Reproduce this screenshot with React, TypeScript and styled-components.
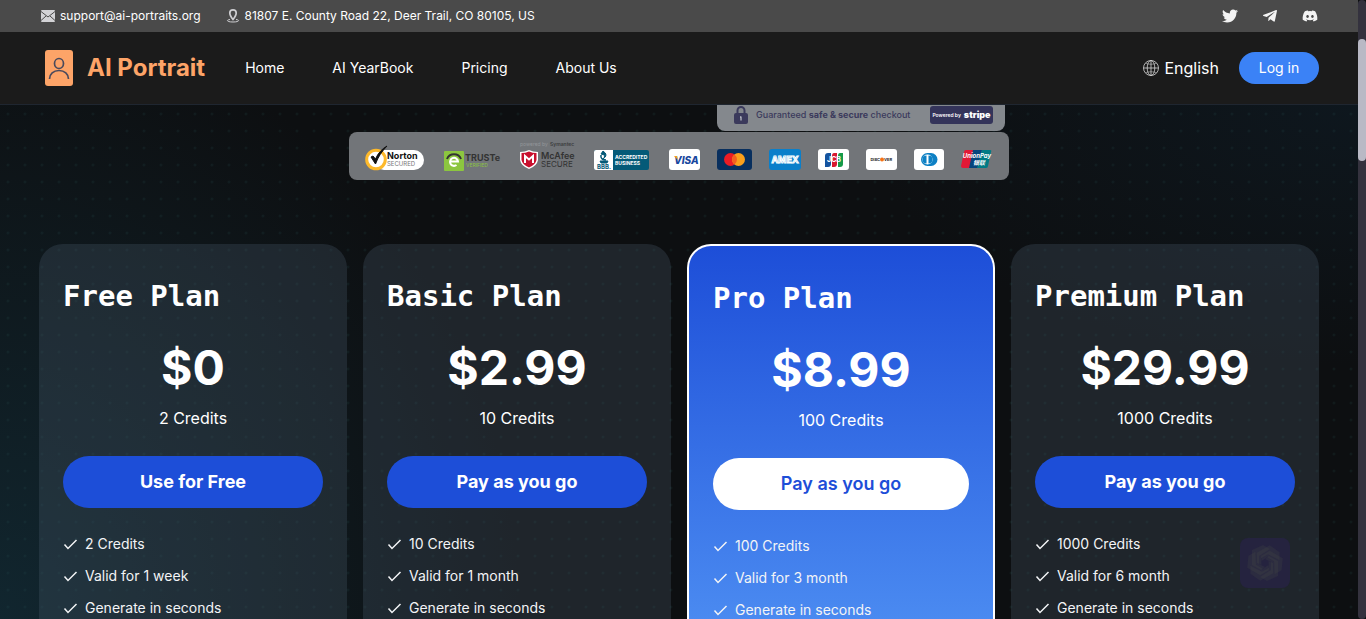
import React from 'react';
import styled, { createGlobalStyle, css } from 'styled-components';
import { FaTwitter, FaTelegramPlane, FaDiscord } from 'react-icons/fa';

const GlobalStyle = createGlobalStyle`
  *, *::before, *::after { box-sizing: border-box; }
  body {
    margin: 0;
    background: #0d0f11;
    color: #fff;
    font-family: Inter, 'Liberation Sans', sans-serif;
  }
  h2, p, ul { margin: 0; padding: 0; }
  a { color: inherit; text-decoration: none; }
  button { font-family: inherit; cursor: pointer; border: 0; }
`;

const Window = styled.div`
  display: grid;
  grid-template-columns: minmax(0, 1fr) 8px;
  height: 100vh;
  overflow: hidden;
`;

const Page = styled.div`
  display: flex;
  flex-direction: column;
  min-height: 0;
`;

const ScrollTrack = styled.div`
  background: #34323e;
  border-radius: 4px;
  padding-top: 39px;
`;

const ScrollThumb = styled.div`
  height: 122px;
  border-radius: 4px;
  background: #b9b9c5;
`;

const ContactBar = styled.div`
  display: flex;
  align-items: center;
  justify-content: space-between;
  flex: none;
  height: 32px;
  padding: 0 40px;
  background: #4a4a4a;
  font-size: 12px;
  line-height: 16px;
`;

const Group = styled.div<{ $gap: number }>`
  display: flex;
  align-items: center;
  gap: ${(p) => p.$gap}px;
`;

const ContactItem = styled.a`
  display: flex;
  align-items: center;
  gap: 4px;
`;

const SocialLink = styled.a`
  display: flex;
  color: #f3f3f3;
  font-size: 16px;
`;

const Header = styled.header`
  flex: none;
  height: 73px;
  background: #1b1b1b;
  border-bottom: 1px solid #1f2630;
`;

const HeaderInner = styled.div`
  display: flex;
  align-items: center;
  justify-content: space-between;
  max-width: 1280px;
  height: 72px;
  margin: 0 auto;
`;

const Brand = styled.a`
  display: flex;
  align-items: center;
  gap: 8px;
  color: #fda468;
  font-size: 24px;
  font-weight: 700;
  line-height: 32px;
`;

const Nav = styled.nav`
  display: flex;
  gap: 48px;
  font-size: 14px;
  line-height: 20px;
`;

const LanguageButton = styled.button`
  display: flex;
  align-items: center;
  gap: 5px;
  padding: 0;
  background: none;
  color: #fff;
  font-size: 16px;
  line-height: 24px;
`;

const LoginButton = styled.button`
  width: 80px;
  height: 32px;
  border-radius: 16px;
  background: #3b82f6;
  color: #fff;
  font-size: 14px;
  line-height: 20px;
`;

const Main = styled.main`
  flex: 1;
  display: flex;
  flex-direction: column;
  align-items: center;
  min-height: 0;
  overflow: hidden;
  background:
    radial-gradient(circle at 8px 9px, rgba(40, 85, 85, 0.24) 0, rgba(40, 85, 85, 0) 2px) 0 0 / 17px 17px,
    radial-gradient(ellipse 520px 600px at 0% 100%, #11262f 0%, rgba(17, 38, 47, 0) 100%),
    radial-gradient(ellipse 500px 260px at 100% 0%, #0e171e 0%, rgba(14, 23, 30, 0) 100%),
    #0d0f11;
`;

const Trust = styled.section`
  display: flex;
  flex-direction: column;
  flex: none;
  gap: 1px;
  width: 660px;
`;

const Checkout = styled.div`
  display: flex;
  align-items: flex-start;
  align-self: flex-end;
  width: 288px;
  height: 26px;
  margin-right: 4px;
  padding: 1px 12px 0 16px;
  border-radius: 0 0 8px 8px;
  background: #84888d;
  color: #3b3a5c;
  font-size: 9px;
  font-weight: 500;
  line-height: 18px;
`;

const CheckoutText = styled.p`
  flex: 1;
  padding-left: 7px;
  white-space: nowrap;
`;

const StripeBadge = styled.span`
  display: flex;
  align-items: center;
  justify-content: center;
  gap: 3px;
  width: 63px;
  height: 18px;
  border-radius: 3px;
  background: #34345a;
  color: #fff;
  font-size: 5px;
  font-weight: 600;
  white-space: nowrap;

  strong { font-size: 9px; }
`;

const LogoStrip = styled.div`
  display: flex;
  gap: 20px;
  padding: 8px 16px;
  border-radius: 8px;
  background: #727579;
`;

const CardLogos = styled.div`
  display: flex;
  gap: 17px;
`;

const Plans = styled.section`
  flex: 1;
  display: grid;
  grid-template-columns: repeat(4, minmax(0, 1fr));
  gap: 16px;
  width: 100%;
  max-width: 1280px;
  min-height: 0;
  margin-top: 64px;
`;

const Card = styled.article<{ $featured?: boolean }>`
  padding: 32px 24px 0;
  border-radius: 24px 24px 0 0;
  background: rgba(73, 88, 105, 0.3);
  ${(p) =>
    p.$featured &&
    css`
      border: 2px solid #fff;
      border-bottom: 0;
      background: linear-gradient(to bottom, #1d4ed8, #4b8bf1);
    `}
`;

const PlanName = styled.h2`
  font-family: 'DejaVu Sans Mono', monospace;
  font-size: 29px;
  font-weight: 700;
  line-height: 40px;
`;

const Price = styled.p`
  margin-top: 28px;
  font-size: 48px;
  font-weight: 700;
  line-height: 48px;
  text-align: center;
`;

const Credits = styled.p`
  margin-top: 14px;
  font-size: 16px;
  line-height: 24px;
  text-align: center;
`;

const PlanButton = styled.button<{ $featured?: boolean }>`
  width: 100%;
  height: 52px;
  margin-top: 26px;
  border-radius: 26px;
  background: ${(p) => (p.$featured ? '#fff' : '#1d4ed8')};
  color: ${(p) => (p.$featured ? '#1d4ed8' : '#fff')};
  font-size: 18px;
  font-weight: ${(p) => (p.$featured ? 600 : 700)};
  line-height: 28px;
`;

const Features = styled.ul`
  margin-top: 20px;
  list-style: none;
  color: #f3f4f6;
  font-size: 14px;
  line-height: 32px;
`;

const Feature = styled.li`
  display: flex;
  align-items: center;
  gap: 6px;
`;

const FloatingBadge = styled.div`
  position: fixed;
  right: 76px;
  bottom: 31px;
  width: 50px;
  height: 50px;
  border-radius: 8px;
  background: #25233f;
`;

const logoFont = "Inter, 'Liberation Sans', sans-serif";

const MailIcon = () => (
  <svg width="16" height="16" viewBox="0 0 16 16" aria-hidden="true">
    <rect x="1" y="2" width="14" height="12" rx="1" fill="#d3d3d6" />
    <path d="M1 3.500l7 5.500 7-5.500M1 12.500l5-4.500M15 12.500l-5-4.500" fill="none" stroke="#4a4a4a" />
  </svg>
);

const PinIcon = () => (
  <svg width="16" height="16" viewBox="0 0 16 16" fill="none" stroke="#cfcfd2" aria-hidden="true">
    <path d="M8 11.500C6 9 4.800 7 4.800 5a3.200 3.200 0 0 1 6.400 0c0 2-1.200 4-3.200 6.500z" strokeWidth="1.700" />
    <path d="M5 11.500C1 12 1.500 14 8 14s7-2 3-2.500" />
  </svg>
);

const BrandIcon = () => (
  <svg width="40" height="40" viewBox="0 0 40 40" aria-hidden="true">
    <rect x="6" y="2" width="28" height="36" rx="3" fill="#fda468" />
    <g fill="none" stroke="#4a4a5c" strokeWidth="1.700">
      <ellipse cx="20" cy="15.500" rx="4.500" ry="5" />
      <path d="M10.500 31c0-5 4-8.500 9.500-8.500s9.500 3.500 9.500 8.500" />
    </g>
  </svg>
);

const GlobeIcon = () => (
  <svg width="16" height="16" viewBox="0 0 16 16" fill="none" stroke="#d6d6d6" strokeWidth=".8" aria-hidden="true">
    <circle cx="8" cy="8" r="7.500" />
    <ellipse cx="8" cy="8" rx="3.800" ry="7.500" />
    <path d="M.5 8h15M8 .5v15" />
    <path d="M2.500 3.200c3 1.400 8 1.400 11 0M2.500 12.800c3-1.400 8-1.400 11 0" opacity=".6" />
  </svg>
);

const LockIcon = () => (
  <svg width="16" height="18" viewBox="0 0 16 18" aria-hidden="true">
    <path d="M4.500 8V4.500a3.500 3.500 0 0 1 7 0V8" fill="none" stroke="#3b3a5c" strokeWidth="2" />
    <rect x="1" y="7" width="14" height="11" rx="2" fill="#3b3a5c" />
    <path d="M8 10.500v4M7 11h1" stroke="#b9bbc4" strokeWidth="1.300" />
  </svg>
);

const CheckIcon = () => (
  <svg width="16" height="16" viewBox="0 0 16 16" fill="none" aria-hidden="true">
    <path d="M1.500 8.500l3.500 4L13.500 4" stroke="#f3f4f6" strokeWidth="1.500" />
  </svg>
);

const SwirlIcon = () => (
  <svg width="50" height="50" viewBox="0 0 50 50" aria-hidden="true">
    {[0, 60, 120, 180, 240, 300].map((angle) => (
      <path
        key={angle}
        d="M12 12L12 27 21 32 25 29 19 26 19 18 30 11 23 7z"
        transform={`rotate(${angle} 25 25)`}
        fill="#4a5048"
        opacity=".2"
      />
    ))}
  </svg>
);

const Logo = ({ width, label, children }: { width: number; label: string; children: React.ReactNode }) => (
  <svg width={width} height="32" viewBox={`0 0 ${width} 32`} role="img" aria-label={label} fontFamily={logoFont} overflow="visible">
    {children}
  </svg>
);

const TrustLogos = () => (
  <LogoStrip>
    <Logo width={59} label="Norton Secured">
      <rect x="9" y="10" width="50" height="20" rx="10" fill="#fff" />
      <circle cx="11" cy="19.500" r="9.300" fill="#fff" stroke="#fdb92b" strokeWidth="3" />
      <path d="M6 17l4.500 7C13 17 17 11 22 6c-5 3-9 7-11.500 13L8 16z" fill="#111" stroke="#111" />
      <text x="22" y="19" fontSize="9" fontWeight="700" fill="#111">Norton</text>
      <text x="22" y="26" fontSize="6" fill="#777">SECURED</text>
    </Logo>
    <Logo width={56} label="TRUSTe Verified">
      <rect y="11" width="20" height="20" rx="1" fill="#8cc63f" />
      <path d="M3 19a7.500 7.500 0 0 1 14 0" fill="none" stroke="#333" strokeWidth="2" />
      <path d="M6.500 21.500h7.500a4 4 0 1 0-1.500 3.500" fill="none" stroke="#fff" strokeWidth="2" />
      <text x="21" y="21" fontSize="9" fontWeight="700" fill="#333">TRUSTe</text>
      <text x="22" y="27" fontSize="5" fill="#8cc63f">VERIFIED</text>
    </Logo>
    <Logo width={54} label="McAfee Secure">
      <text x="0" y="6" fontSize="5" fill="#939599">powered by</text>
      <text x="30" y="6" fontSize="5" fontWeight="600" fill="#3b3c3e">Symantec</text>
      <path d="M0 12q5 0 9-2 4 2 9 2v8q-1 6-9 9-8-3-9-9z" fill="#fff" />
      <path d="M1.500 13q4 0 7.500-1.500 3.500 1.500 7.500 1.500v7q-1 5-7.500 7.500Q2.500 25 1.500 20z" fill="#c8102e" />
      <path d="M5 23v-7l4 3.500 4-3.500v7" fill="none" stroke="#fff" strokeWidth="2" />
      <text x="21" y="19" fontSize="9" fontWeight="600" fill="#333">McAfee</text>
      <text x="21" y="27" fontSize="8" fill="#333">SECURE</text>
    </Logo>
    <Logo width={55} label="BBB Accredited Business">
      <rect y="10" width="55" height="20" rx="2" fill="#045a78" />
      <path d="M2 10h17v20H2a2 2 0 0 1-2-2V12q0-2 2-2z" fill="#fff" />
      <path d="M9 11q6 4 0 8 4-4-2-5zM7 15q-1 4 5 5-6 1-5-5zM6 21h8l-1 2H7z" fill="#045a78" stroke="#045a78" />
      <text x="3" y="29" fontSize="6" fontWeight="700" fill="#045a78">BBB.</text>
      <text x="21" y="19" fontSize="5" fontWeight="700" fill="#fff">ACCREDITED</text>
      <text x="21" y="25" fontSize="5" fontWeight="700" fill="#fff">BUSINESS</text>
    </Logo>
    <CardLogos>
      <Logo width={31} label="Visa">
        <rect y="9" width="31" height="21" rx="3" fill="#fff" />
        <text x="5" y="24" fontSize="10" fontWeight="800" fontStyle="italic" fill="#17479e">VISA</text>
        <path d="M5 16h3l1 4z" fill="#f6a01a" />
      </Logo>
      <Logo width={35} label="Mastercard">
        <rect y="9" width="35" height="21" rx="3" fill="#082f5e" />
        <circle cx="13.500" cy="19.500" r="6.500" fill="#eb1c24" />
        <circle cx="21.500" cy="19.500" r="6.500" fill="#f99f1b" />
        <path d="M17.500 14.400a6.500 6.500 0 0 1 0 10.200 6.500 6.500 0 0 1 0-10.200z" fill="#f36020" />
      </Logo>
      <Logo width={32} label="American Express">
        <rect y="9" width="32" height="21" rx="3" fill="#0a7fca" />
        <text x="16" y="23" fontSize="9" fontWeight="700" textAnchor="middle" fill="#0a7fca" stroke="#fff" strokeWidth="1">AMEX</text>
      </Logo>
      <Logo width={31} label="JCB">
        <rect y="9" width="31" height="21" rx="3" fill="#fff" />
        <path d="M10 13h3v11q0 3-3 3H7V16q0-3 3-3z" fill="#14539f" />
        <path d="M16 13h3v11q0 3-3 3h-2V16q0-3 2-3z" fill="#d7182f" />
        <path d="M22 13h3v11q0 3-3 3h-2V16q0-3 2-3z" fill="#159a48" />
        <text x="16" y="22" fontSize="7" fontWeight="700" textAnchor="middle" fill="#fff">JCB</text>
      </Logo>
      <Logo width={31} label="Discover">
        <rect y="9" width="31" height="21" rx="3" fill="#fff" />
        <text x="14" y="21" fontSize="4" fontWeight="700" textAnchor="end" fill="#222">DISC</text>
        <circle cx="16" cy="19.500" r="2" fill="#f47216" />
        <text x="18" y="21" fontSize="4" fontWeight="700" fill="#222">VER</text>
      </Logo>
      <Logo width={30} label="Diners Club">
        <rect y="9" width="30" height="21" rx="3" fill="#fff" />
        <path d="M13 13h4a6.500 6.500 0 0 1 0 13h-4z" fill="#0d80c4" />
        <circle cx="13.500" cy="19.500" r="5.800" fill="#fff" stroke="#0d80c4" strokeWidth="1.400" />
        <path d="M12.500 15.500a4 4 0 0 0 0 8zM14.500 15.500a4 4 0 0 1 0 8z" fill="#0d80c4" />
      </Logo>
      <Logo width={31} label="UnionPay">
        <path d="M5 10h8L9 28H2q-2 0-2-2l3-14q0-2 2-2z" fill="#e21836" />
        <path d="M12 10h9l-4 18H8z" fill="#06447c" />
        <path d="M21 10h8q2 0 1 2l-3 14q0 2-2 2h-9z" fill="#007b85" />
        <text x="16" y="18" fontSize="6" fontWeight="700" fontStyle="italic" textAnchor="middle" fill="#fff">UnionPay</text>
        <text x="18" y="25" fontSize="6" fontWeight="700" fontStyle="italic" textAnchor="middle" fill="#fff" fontFamily="'Noto Sans CJK SC', sans-serif">银联</text>
      </Logo>
    </CardLogos>
  </LogoStrip>
);

const plans = [
  { name: 'Free Plan', price: '$0', credits: '2 Credits', action: 'Use for Free', validity: 'Valid for 1 week' },
  { name: 'Basic Plan', price: '$2.99', credits: '10 Credits', action: 'Pay as you go', validity: 'Valid for 1 month' },
  { name: 'Pro Plan', price: '$8.99', credits: '100 Credits', action: 'Pay as you go', validity: 'Valid for 3 month', featured: true },
  { name: 'Premium Plan', price: '$29.99', credits: '1000 Credits', action: 'Pay as you go', validity: 'Valid for 6 month' },
];

export default function App() {
  return (
    <Window>
      <GlobalStyle />
      <Page>
        <ContactBar>
          <Group $gap={24}>
            <ContactItem href="mailto:support@ai-portraits.org">
              <MailIcon />
              support@ai-portraits.org
            </ContactItem>
            <ContactItem href="#address">
              <PinIcon />
              81807 E. County Road 22, Deer Trail, CO 80105, US
            </ContactItem>
          </Group>
          <Group $gap={24}>
            <SocialLink href="#twitter" aria-label="Twitter"><FaTwitter /></SocialLink>
            <SocialLink href="#telegram" aria-label="Telegram"><FaTelegramPlane /></SocialLink>
            <SocialLink href="#discord" aria-label="Discord"><FaDiscord /></SocialLink>
          </Group>
        </ContactBar>
        <Header>
          <HeaderInner>
            <Group $gap={40}>
              <Brand href="#home">
                <BrandIcon />
                AI Portrait
              </Brand>
              <Nav>
                <a href="#home">Home</a>
                <a href="#yearbook">AI YearBook</a>
                <a href="#pricing">Pricing</a>
                <a href="#about">About Us</a>
              </Nav>
            </Group>
            <Group $gap={20}>
              <LanguageButton type="button">
                <GlobeIcon />
                English
              </LanguageButton>
              <LoginButton type="button">Log in</LoginButton>
            </Group>
          </HeaderInner>
        </Header>
        <Main>
          <Trust>
            <Checkout>
              <LockIcon />
              <CheckoutText>
                Guaranteed <b>safe &amp; secure</b> checkout
              </CheckoutText>
              <StripeBadge>
                Powered by <strong>stripe</strong>
              </StripeBadge>
            </Checkout>
            <TrustLogos />
          </Trust>
          <Plans>
            {plans.map((plan) => (
              <Card key={plan.name} $featured={plan.featured}>
                <PlanName>{plan.name}</PlanName>
                <Price>{plan.price}</Price>
                <Credits>{plan.credits}</Credits>
                <PlanButton type="button" $featured={plan.featured}>{plan.action}</PlanButton>
                <Features>
                  {[plan.credits, plan.validity, 'Generate in seconds'].map((feature) => (
                    <Feature key={feature}>
                      <CheckIcon />
                      {feature}
                    </Feature>
                  ))}
                </Features>
              </Card>
            ))}
          </Plans>
        </Main>
      </Page>
      <ScrollTrack>
        <ScrollThumb />
      </ScrollTrack>
      <FloatingBadge>
        <SwirlIcon />
      </FloatingBadge>
    </Window>
  );
}
